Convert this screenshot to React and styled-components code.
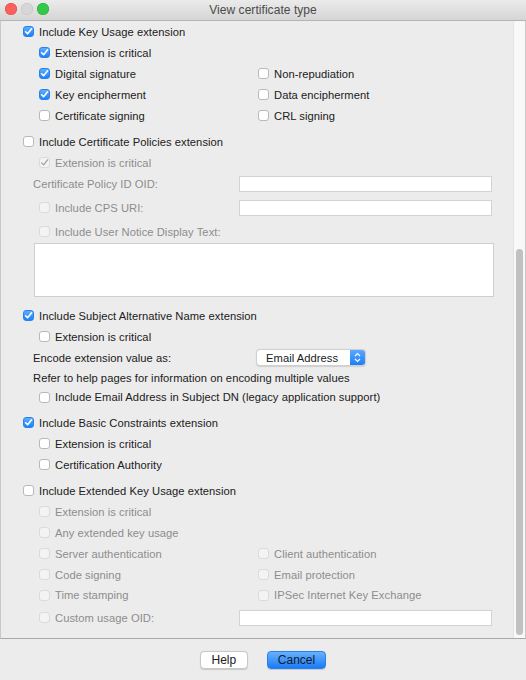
import React from 'react';
import styled, { createGlobalStyle } from 'styled-components';

const GlobalStyle = createGlobalStyle`
  html, body {
    margin: 0;
    padding: 0;
    background: #ececec;
  }
  body {
    font-family: "Liberation Sans", Arial, sans-serif;
    font-size: 11.2px;
    letter-spacing: 0.05px;
    color: #202020;
  }
`

const Window = styled.div`
  width: 526px;
  height: 680px;
  display: flex;
  flex-direction: column;
  background: #ececec;
  overflow: hidden;
`

const TitleBar = styled.div`
  height: 20px;
  flex: none;
  display: flex;
  align-items: center;
  position: relative;
  background: linear-gradient(#ebebeb, #d5d5d5);
  border-bottom: 1px solid #b4b4b4;
  font-size: 12px;
  color: #4a4a4a;
  justify-content: center;
`

const Lights = styled.div`
  position: absolute;
  left: 5px;
  top: 3px;
  display: flex;
  gap: 4px;
`

const Light = styled.span`
  width: 12px;
  height: 12px;
  border-radius: 50%;
  background: ${p => p.color};
  box-shadow: inset 0 0 0 0.5px ${p => p.edge};
`

const ScrollPane = styled.div`
  height: 617px;
  flex: none;
  display: flex;
  border-bottom: 1px solid #a8a8a8;
  border-left: 1px solid #c9c9c9;
  border-right: 1px solid #c9c9c9;
  background: #ececec;
`

const Content = styled.div`
  flex: 1;
  display: flex;
  flex-direction: column;
  overflow: hidden;
`

const Track = styled.div`
  width: 12px;
  flex: none;
  background: #f8f8f8;
  border-left: 1px solid #e4e4e4;
  display: flex;
  flex-direction: column;
  padding-top: 228px;
  padding-bottom: 3px;
  box-sizing: border-box;
  align-items: center;
`

const Thumb = styled.div`
  width: 7px;
  flex: 1;
  border-radius: 4px;
  background: #c1c1c1;
`

const Row = styled.div`
  height: ${p => p.h || 21}px;
  margin-top: ${p => p.mt || 0}px;
  flex: none;
  display: flex;
  align-items: center;
  padding-left: ${p => p.indent}px;
  color: ${p => (p.disabled ? '#8d8d8d' : '#202020')};
`

const TwoCol = styled(Row)`
  display: grid;
  grid-template-columns: 219px 1fr;
  align-items: center;
`

const FieldRow = styled(Row)`
  display: grid;
  grid-template-columns: ${p => p.label}px 253px;
  align-items: center;
`

const Option = styled.label`
  display: flex;
  align-items: center;
  gap: 5px;
  white-space: nowrap;
  color: ${p => (p.disabled ? '#8d8d8d' : '#202020')};
`

const Box = styled.span`
  width: 11px;
  height: 11px;
  flex: none;
  border-radius: 3px;
  display: flex;
  align-items: center;
  justify-content: center;
  box-sizing: border-box;
  background: ${p =>
    p.checked && !p.disabled
      ? 'linear-gradient(#5daefe, #1c82fb)'
      : p.disabled
      ? '#f3f3f3'
      : '#ffffff'};
  border: 1px solid
    ${p => (p.checked && !p.disabled ? '#2a82e8' : p.disabled ? '#dadada' : '#b9b9b9')};
`

const Field = styled.div`
  height: 16px;
  background: #ffffff;
  border: 1px solid #d3d3d3;
  box-sizing: border-box;
`

const TextArea = styled.div`
  height: 54px;
  margin: 1px 0 0 33px;
  width: 460px;
  flex: none;
  background: #ffffff;
  border: 1px solid #cfcfcf;
  box-sizing: border-box;
`

const Select = styled.div`
  width: 110px;
  height: 17px;
  box-sizing: border-box;
  display: flex;
  align-items: center;
  background: #ffffff;
  border: 1px solid #d0d0d0;
  border-radius: 4px;
  box-shadow: 0 0.5px 1px rgba(0, 0, 0, 0.12);
  overflow: hidden;
`

const SelectText = styled.span`
  flex: 1;
  padding-left: 9px;
  color: #202020;
`

const Stepper = styled.span`
  width: 15px;
  height: 100%;
  display: flex;
  align-items: center;
  justify-content: center;
  background: linear-gradient(#5aa9fd, #1b7ff9);
`

const ButtonBar = styled.div`
  flex: 1;
  display: flex;
  justify-content: center;
  align-items: flex-start;
  gap: 19px;
  padding-top: 12px;
`

const Button = styled.button`
  height: 18px;
  min-width: ${p => p.w}px;
  padding: 0 10px;
  font-family: "Liberation Sans", Arial, sans-serif;
  font-size: 12px;
  border-radius: 4px;
  color: ${p => (p.primary ? '#111a2c' : '#202020')};
  background: ${p => (p.primary ? 'linear-gradient(#67b1fd, #1a7cf8)' : '#ffffff')};
  border: 1px solid ${p => (p.primary ? '#2b7fe6' : '#c8c8c8')};
  box-shadow: 0 0.5px 1px rgba(0, 0, 0, 0.15);
`

const Check = ({ disabled }) => (
  <svg width="9" height="9" viewBox="0 0 9 9">
    <path
      d="M1.6 4.8 L3.6 6.8 L7.6 1.8"
      fill="none"
      stroke={disabled ? '#9a9a9a' : '#ffffff'}
      strokeWidth={disabled ? 1.1 : 1.6}
      strokeLinecap="round"
      strokeLinejoin="round"
    />
  </svg>
)

const CheckBox = ({ checked, disabled, children }) => (
  <Option disabled={disabled}>
    <Box checked={checked} disabled={disabled}>
      {checked && <Check disabled={disabled} />}
    </Box>
    {children}
  </Option>
)

const Arrows = () => (
  <svg width="7" height="11" viewBox="0 0 7 11">
    <path d="M1 4 L3.5 1.5 L6 4 M1 7 L3.5 9.5 L6 7" fill="none" stroke="#fff" strokeWidth="1.2" />
  </svg>
)

const App = () => {
  return (
    <Window>
      <GlobalStyle />
      <TitleBar>
        <Lights>
          <Light color="#fc605c" edge="#de4a45" />
          <Light color="#d6d6d6" edge="#c0c0c0" />
          <Light color="#34c84a" edge="#27a83a" />
        </Lights>
        View certificate type
      </TitleBar>
      <ScrollPane>
        <Content>
          <Row indent={22}><CheckBox checked>Include Key Usage extension</CheckBox></Row>
          <Row indent={38}><CheckBox checked>Extension is critical</CheckBox></Row>
          <TwoCol indent={38}>
            <CheckBox checked>Digital signature</CheckBox>
            <CheckBox>Non-repudiation</CheckBox>
          </TwoCol>
          <TwoCol indent={38}>
            <CheckBox checked>Key encipherment</CheckBox>
            <CheckBox>Data encipherment</CheckBox>
          </TwoCol>
          <TwoCol indent={38}>
            <CheckBox>Certificate signing</CheckBox>
            <CheckBox>CRL signing</CheckBox>
          </TwoCol>

          <Row indent={22} mt={5}><CheckBox>Include Certificate Policies extension</CheckBox></Row>
          <Row indent={38}><CheckBox checked disabled>Extension is critical</CheckBox></Row>
          <FieldRow indent={32} label={206} disabled>
            <span>Certificate Policy ID OID:</span>
            <Field />
          </FieldRow>
          <FieldRow indent={38} label={200} mt={3}>
            <CheckBox disabled>Include CPS URI:</CheckBox>
            <Field />
          </FieldRow>
          <Row indent={38} mt={3}><CheckBox disabled>Include User Notice Display Text:</CheckBox></Row>
          <TextArea />

          <Row indent={22} mt={8}><CheckBox checked>Include Subject Alternative Name extension</CheckBox></Row>
          <Row indent={38}><CheckBox>Extension is critical</CheckBox></Row>
          <FieldRow indent={32} label={223}>
            <span>Encode extension value as:</span>
            <Select>
              <SelectText>Email Address</SelectText>
              <Stepper><Arrows /></Stepper>
            </Select>
          </FieldRow>
          <Row indent={32} h={20}>Refer to help pages for information on encoding multiple values</Row>
          <Row indent={38} h={18}><CheckBox>Include Email Address in Subject DN (legacy application support)</CheckBox></Row>

          <Row indent={22} mt={6}><CheckBox checked>Include Basic Constraints extension</CheckBox></Row>
          <Row indent={38}><CheckBox>Extension is critical</CheckBox></Row>
          <Row indent={38}><CheckBox>Certification Authority</CheckBox></Row>

          <Row indent={22} mt={5}><CheckBox>Include Extended Key Usage extension</CheckBox></Row>
          <Row indent={38}><CheckBox disabled>Extension is critical</CheckBox></Row>
          <Row indent={38}><CheckBox disabled>Any extended key usage</CheckBox></Row>
          <TwoCol indent={38}>
            <CheckBox disabled>Server authentication</CheckBox>
            <CheckBox disabled>Client authentication</CheckBox>
          </TwoCol>
          <TwoCol indent={38}>
            <CheckBox disabled>Code signing</CheckBox>
            <CheckBox disabled>Email protection</CheckBox>
          </TwoCol>
          <TwoCol indent={38} h={20}>
            <CheckBox disabled>Time stamping</CheckBox>
            <CheckBox disabled>IPSec Internet Key Exchange</CheckBox>
          </TwoCol>
          <FieldRow indent={38} label={200} mt={2}>
            <CheckBox disabled>Custom usage OID:</CheckBox>
            <Field />
          </FieldRow>
        </Content>
        <Track>
          <Thumb />
        </Track>
      </ScrollPane>
      <ButtonBar>
        <Button w={48}>Help</Button>
        <Button w={58} primary>Cancel</Button>
      </ButtonBar>
    </Window>
  );
}

export default App;
